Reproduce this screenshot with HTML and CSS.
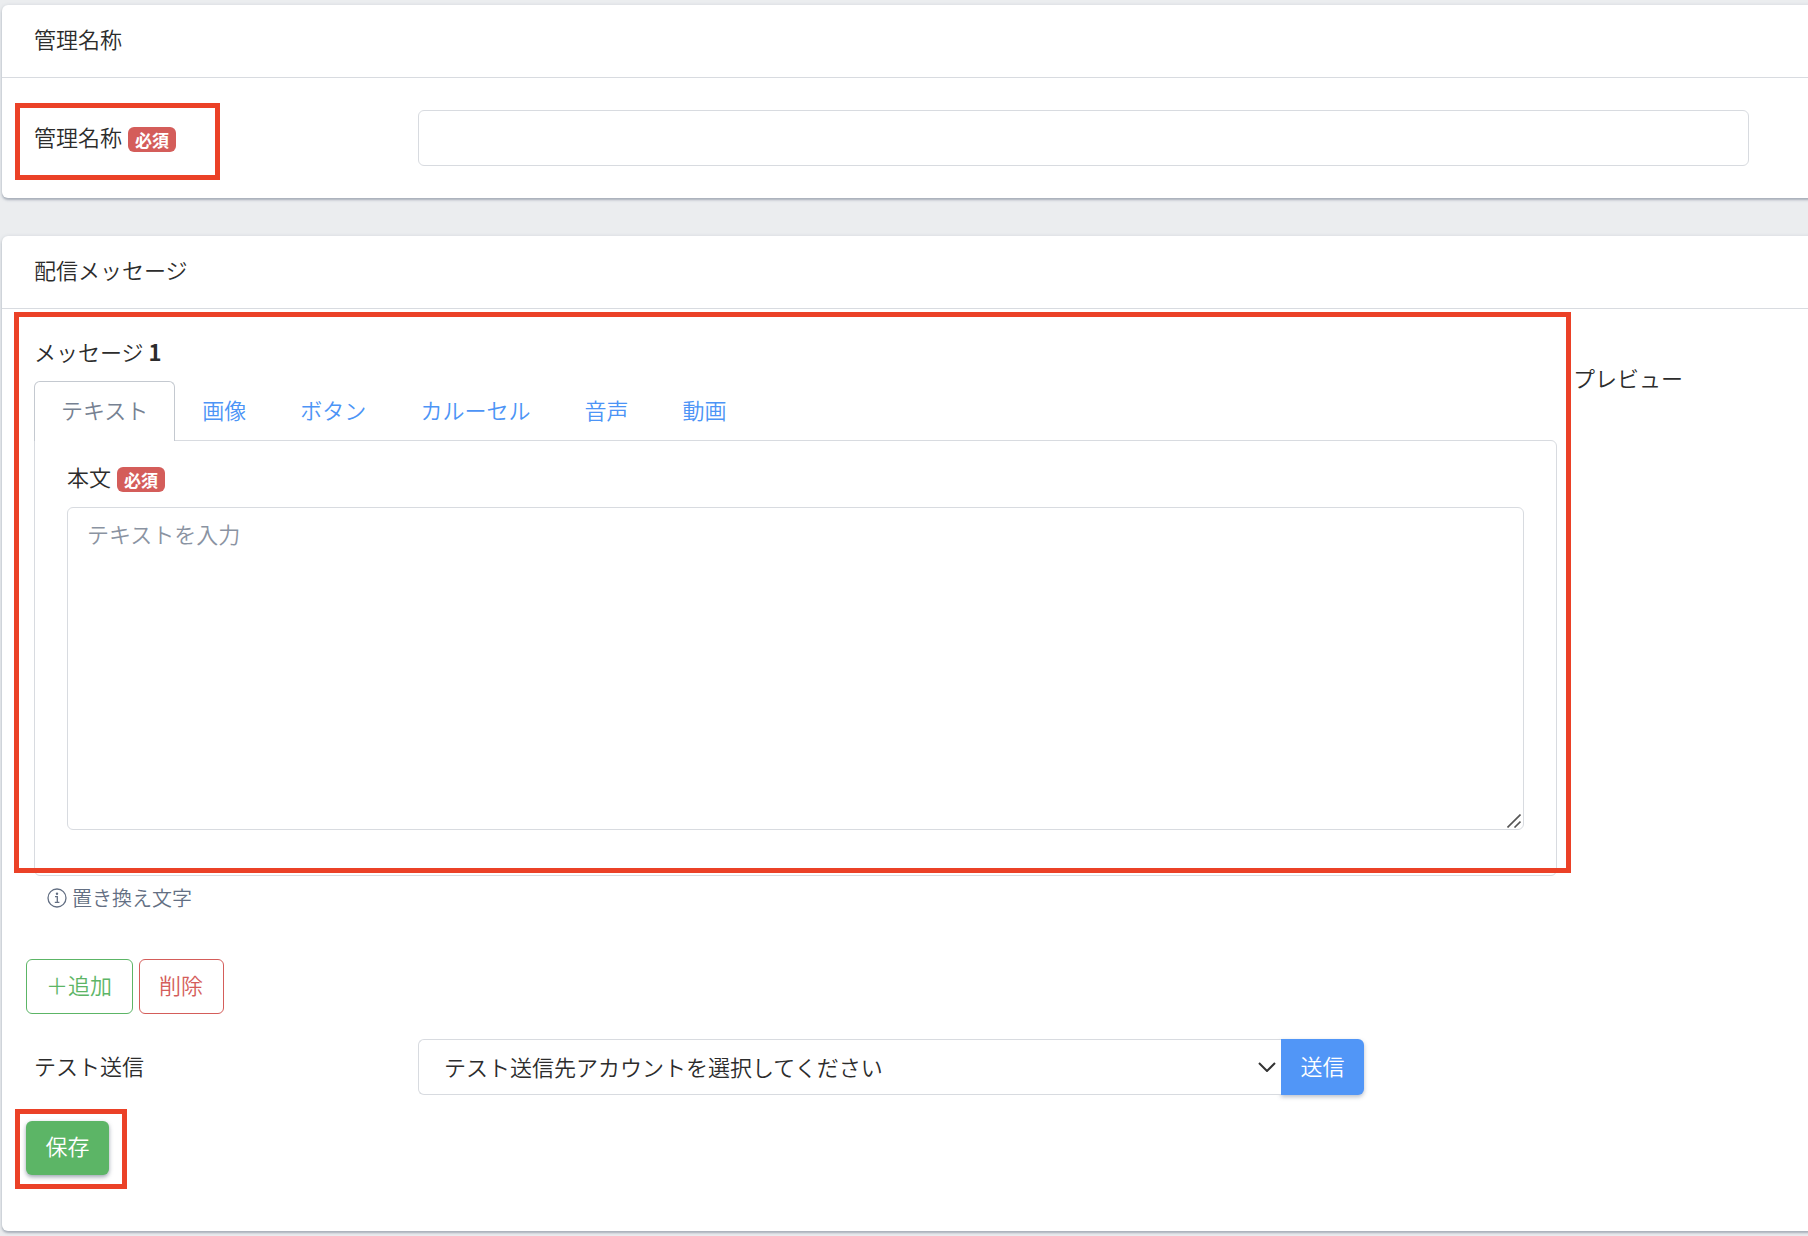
FILE: index.html
```html
<!DOCTYPE html>
<html lang="ja">
<head>
    <meta charset="UTF-8">
    <meta name="viewport" content="width=device-width, initial-scale=1.0">
    <title>配信メッセージ</title>
    <link rel="stylesheet" href="styles.css">
</head>
<body>
    <form class="page">
        <section class="card">
            <h2 class="card-header">管理名称</h2>
            <div class="card-body">
                <div class="form-row">
                    <div class="form-label">
                        <label for="name">管理名称</label>
                        <span class="badge">必須</span>
                        <div class="mark mark-name"></div>
                    </div>
                    <input type="text" id="name" name="name" class="form-control" required>
                </div>
            </div>
        </section>

        <section class="card">
            <h2 class="card-header">配信メッセージ</h2>
            <div class="card-body card-body-message">
                <div class="message-row">
                    <div class="message">
                        <h3 class="message-title">メッセージ <b>1</b></h3>
                        <ul class="tabs">
                            <li><a href="#text" class="tab active">テキスト</a></li>
                            <li><a href="#image" class="tab">画像</a></li>
                            <li><a href="#button" class="tab">ボタン</a></li>
                            <li><a href="#carousel" class="tab">カルーセル</a></li>
                            <li><a href="#audio" class="tab">音声</a></li>
                            <li><a href="#video" class="tab">動画</a></li>
                        </ul>
                        <div class="tab-pane" id="text">
                            <div class="pane-label">
                                <label for="body">本文</label>
                                <span class="badge">必須</span>
                            </div>
                            <div class="textarea-wrap">
                                <textarea id="body" name="body" placeholder="テキストを入力" required></textarea>
                                <svg class="grip" width="14" height="14" viewBox="0 0 14 14" fill="none" stroke="#555" stroke-width="1.6">
                                    <path d="M0.5 13.5 13.5 0.5M7.5 13.5 13.5 7.5"/>
                                </svg>
                            </div>
                        </div>
                        <div class="mark mark-message"></div>
                    </div>
                    <h3 class="preview">プレビュー</h3>
                </div>

                <p class="hint">
                    <svg width="20" height="20" viewBox="0 0 20 20" fill="none" stroke="#636f83" stroke-width="1.3">
                        <circle cx="10" cy="10" r="9"/>
                        <circle cx="10" cy="5.7" r="1.2" fill="#636f83" stroke="none"/>
                        <path d="M8 8.6h2.3v5.7M7.8 14.4h4.6"/>
                    </svg>
                    置き換え文字
                </p>

                <div class="actions">
                    <button type="button" class="btn btn-outline-success">＋追加</button>
                    <button type="button" class="btn btn-outline-danger">削除</button>
                </div>

                <div class="form-row">
                    <div class="form-label">
                        <label for="account">テスト送信</label>
                    </div>
                    <div class="input-group">
                        <div class="select-wrap">
                            <select id="account" name="account" class="form-control">
                                <option>テスト送信先アカウントを選択してください</option>
                            </select>
                            <svg class="chevron" width="18" height="10" viewBox="0 0 18 10" fill="none" stroke="#333" stroke-width="2">
                                <path d="M1 1l8 8 8-8"/>
                            </svg>
                        </div>
                        <button type="button" class="btn btn-primary">送信</button>
                    </div>
                </div>

                <div class="save">
                    <button type="submit" class="btn btn-success">保存</button>
                    <div class="mark mark-save"></div>
                </div>
            </div>
        </section>
    </form>
</body>
</html>
```
FILE: styles.css
```css
* {
    box-sizing: border-box;
}
body {
    margin: 0;
    background: #ebedef;
    color: #2c2c2c;
    font-family: "Noto Sans CJK JP", sans-serif;
    font-size: 22px;
    font-weight: 350;
    line-height: 33px;
    overflow-x: hidden;
}
h2, h3, p, ul {
    margin: 0;
    padding: 0;
    font-size: 22px;
    font-weight: 350;
}
input, textarea, select, button {
    font: inherit;
    color: inherit;
}

/* Cards run off the right edge of the window */
.page {
    display: flex;
    flex-direction: column;
    gap: 38px;
    padding: 5px 0 5px 2px;
}
.card {
    margin-right: -8px;
    background: #fff;
    border-radius: 6px;
    box-shadow: 0 2px 2px rgba(60, 75, 100, 0.28), 0 1px 4px rgba(60, 75, 100, 0.2);
}
.card-header {
    padding: 17px 32px 22px;
    border-bottom: 1px solid #d8dbe0;
}
.card-body {
    padding: 32px 67px 32px 24px;
}
.card-body-message {
    padding: 26px 8px 56px 24px;
}

/* Form rows */
.form-row {
    display: flex;
    align-items: center;
}
.form-label {
    position: relative;
    flex: 0 0 392px;
    padding: 0 0 4px 8px;
}
.form-control {
    width: 100%;
    height: 56px;
    padding: 10px 20px;
    border: 1px solid #d8dbe0;
    border-radius: 6px;
    background: #fff;
}
.badge {
    display: inline-block;
    margin-left: 1px;
    padding: 0 7px;
    border-radius: 6px;
    background: #d45d5a;
    color: #fff;
    font-size: 17px;
    font-weight: 700;
    line-height: 25px;
    vertical-align: -1px;
}

/* Message editor */
.message-row {
    display: flex;
    gap: 16px;
    padding-left: 8px;
}
.message {
    position: relative;
    flex: 1;
}
.message-title {
    margin-bottom: 13px;
}
.preview {
    flex: 0 0 235px;
    margin-top: 26px;
}
.tabs {
    position: relative;
    display: flex;
    margin-bottom: -1px;
    list-style: none;
}
.tab {
    display: block;
    padding: 11px 26px 15px;
    border: 1px solid transparent;
    border-bottom: 0;
    border-radius: 6px 6px 0 0;
    color: #4c94f6;
    text-decoration: none;
}
.tab.active {
    border-color: #c4c9d0;
    background: #fff;
    color: #768192;
}
.tab-pane {
    padding: 19px 32px 45px;
    border: 1px solid #d8dbe0;
    border-radius: 0 6px 6px 6px;
}
.pane-label {
    margin-bottom: 14px;
}
.textarea-wrap {
    position: relative;
}
textarea {
    display: block;
    width: 100%;
    height: 323px;
    padding: 9px 19px;
    border: 1px solid #d8dbe0;
    border-radius: 6px;
    resize: none;
}
textarea::placeholder {
    color: #8a93a2;
}
.grip {
    position: absolute;
    right: 3px;
    bottom: 2px;
    pointer-events: none;
}
.hint {
    display: flex;
    align-items: center;
    gap: 5px;
    margin-top: 7px;
    padding-left: 21px;
    color: #636f83;
    font-size: 20px;
    line-height: 30px;
}

/* Buttons */
.actions {
    display: flex;
    gap: 6px;
    margin: 46px 0 25px;
}
.btn {
    min-width: 83px;
    padding: 8px 18px 12px;
    border: 1px solid transparent;
    border-radius: 6px;
    line-height: 33px;
    cursor: pointer;
}
.btn-outline-success {
    padding: 8px 20px 12px 19px;
    border-color: #5cb566;
    background: #fff;
    color: #5cb566;
}
.btn-outline-danger {
    padding: 8px 20px 12px 19px;
    border-color: #d45d5a;
    background: #fff;
    color: #d45d5a;
}
.btn-primary {
    border-radius: 0 6px 6px 0;
    background: #5196f7;
    color: #fff;
    box-shadow: 0 2px 4px rgba(60, 75, 100, 0.35);
}
.btn-success {
    padding: 7px 18px 12px;
    background: #5cb566;
    color: #fff;
    box-shadow: 0 2px 4px rgba(60, 75, 100, 0.5);
}
.input-group {
    display: flex;
    flex: 0 1 946px;
}
.select-wrap {
    position: relative;
    flex: 1;
}
.select-wrap select {
    padding: 0 48px 2px 25px;
    border-right: 0;
    border-radius: 6px 0 0 6px;
    appearance: none;
}
.chevron {
    position: absolute;
    top: 23px;
    right: 5px;
    pointer-events: none;
}
.save {
    position: relative;
    width: fit-content;
    margin-top: 26px;
}

/* Red frames laid over the fields being explained */
.mark {
    position: absolute;
    border: 5px solid #eb4127;
    pointer-events: none;
}
.mark-name {
    top: -17px;
    left: -11px;
    width: 205px;
    height: 77px;
}
.mark-message {
    top: -23px;
    right: -14px;
    bottom: 3px;
    left: -20px;
}
.mark-save {
    top: -12px;
    right: -18px;
    bottom: -14px;
    left: -11px;
}
```
